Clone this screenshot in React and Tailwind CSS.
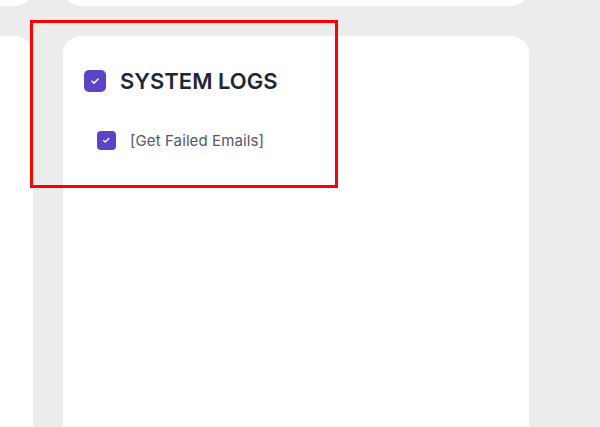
import React from "react";

function Check({ size, radius }) {
  return (
    <span
      className={`flex items-center justify-center bg-[#5b44c6] ${size} ${radius}`}
    >
      <svg viewBox="0 0 16 16" className="w-[55%] h-[55%]" fill="none">
        <path d="M4 8.3l2.6 2.5L12 5.4" stroke="white" strokeWidth="2" strokeLinecap="round" strokeLinejoin="round" />
      </svg>
    </span>
  );
}

export default function App() {
  return (
    <div className="relative w-[600px] h-[427px] overflow-hidden bg-[#ececec] font-['Inter','Liberation_Sans',sans-serif]">
      <div className="ml-[-167px] mt-[-94px] grid grid-cols-[200px_466px] grid-rows-[100px_500px] gap-[30px]">
        <div className="rounded-[18px] bg-white" />
        <div className="rounded-[18px] bg-white" />
        <div className="rounded-[18px] bg-white" />
        <div className="rounded-[18px] bg-white pl-[21px] pt-[34px]">
          <div className="flex items-center gap-[14px]">
            <Check size="w-[22px] h-[22px]" radius="rounded-[5px]" />
            <span className="text-[22px] leading-[22px] font-semibold text-[#1f2638]">SYSTEM LOGS</span>
          </div>
          <div className="mt-[39px] ml-[13px] flex items-center gap-[14px]">
            <Check size="w-[19px] h-[19px]" radius="rounded-[4px]" />
            <span className="text-[15px] leading-[19px] tracking-[0.1px] text-[#525868]">[Get Failed Emails]</span>
          </div>
        </div>
      </div>
      <div className="absolute left-[30px] top-[20px] w-[308px] h-[168px] border-[3px] border-[#ff0000]" />
    </div>
  );
}
